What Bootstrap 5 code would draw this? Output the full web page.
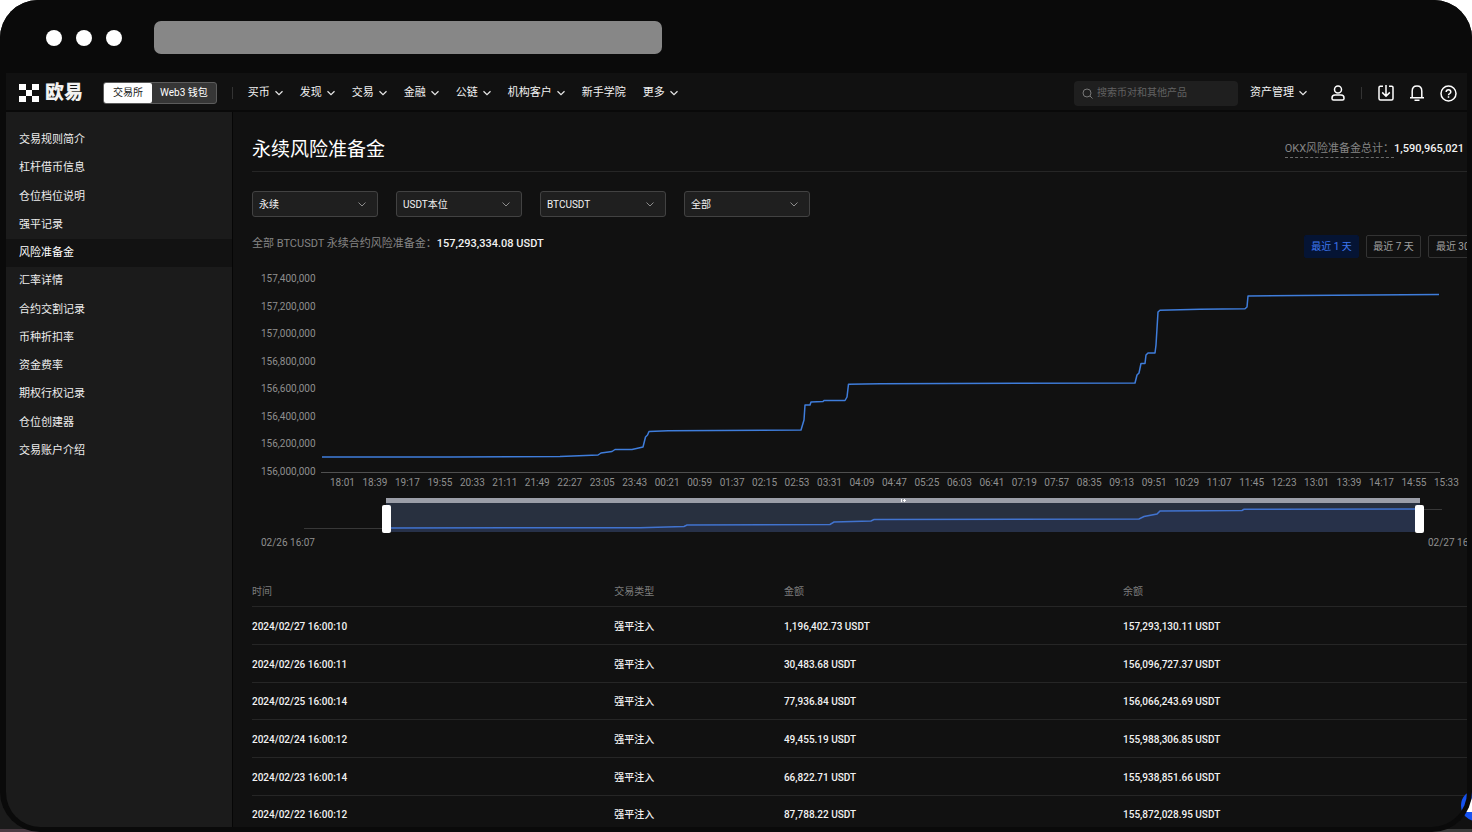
<!DOCTYPE html>
<html lang="zh-CN" data-bs-theme="dark">
<head>
<meta charset="utf-8">
<meta name="viewport" content="width=device-width, initial-scale=1">
<title>永续风险准备金</title>
<link href="https://cdn.jsdelivr.net/npm/bootstrap@5.3.0/dist/css/bootstrap.min.css" rel="stylesheet">
<style>
  body { background: linear-gradient(#fff 50%, #1b1b1b 50%); font: 11px/16px Roboto, "Noto Sans CJK SC", sans-serif; color: #f2f2f2; }
  a { color: inherit; text-decoration: none; }
  .device { border-radius: 38px 38px 0 0; background: #111; }
  .bezel { inset: 73px 0 0 0; border: solid #0a0a0a; border-width: 0 5px 5px 6px; border-radius: 0 0 40px 40px; pointer-events: none; z-index: 5; }
  .desk-edge { height: 3px; background: linear-gradient(90deg, #4b3b43 40px, #3b3b3b 40px); }
  .titlebar { height: 73px; padding: 2px 0 0 46px; background: #0a0a0a; gap: 14px; }
  .dot { width: 16px; height: 16px; background: #fff; }
  .address { width: 508px; height: 33px; margin-left: 18px; border-radius: 7px; background: #878787; border: 0; }
  .topnav { height: 39px; padding: 3px 15px 0 19px; background: #111; border-bottom: 2px solid #090909; }
  .brand-text { font-size: 19px; line-height: 22px; font-weight: 900; margin-left: 6px; }
  .switch-group { margin-left: 20px; height: 22px; border: 1px solid #5c5c5c; border-radius: 3px; background: #363636; font-size: 10px; }
  .switch-group .btn { --bs-btn-font-size: 10px; --bs-btn-line-height: 20px; --bs-btn-padding-y: 0; --bs-btn-padding-x: 8px; --bs-btn-border-radius: 2px; --bs-btn-border-width: 0; color: #fff; }
  .switch-group .btn.on { background: #fff; color: #222; padding-right: 9px; padding-left: 9px; }
  .vline { width: 1px; height: 12px; background: #333; }
  .switch-group + .vline { margin-left: 15px; }
  .icon-btn + .vline { margin: 0 16px; }
  .menu { margin-left: 15px; gap: 17px; }
  .menu a, .asset { gap: 5px; }
  .search { width: 164px; height: 25px; background: #1f1f1f; border-radius: 4px; padding-left: 8px; margin-right: 12px; }
  .search input { font-size: 10px; line-height: 16px; color: #ddd; background: none; border: 0; outline: 0; padding: 0 0 0 4px; }
  .search input::placeholder { color: #626262; opacity: 1; }
  .icon-btn { background: none; border: 0; padding: 0; color: #fff; line-height: 0; }
  .icon-btn + .icon-btn { margin-left: 16px; }
  .asset + .icon-btn { margin-left: 24px; }
  .aside { width: 233px; background: #1b1b1b; padding-top: 14px; border-right: 1px solid #060606; }
  .aside .nav { height: 339px; }
  .aside .nav-link { display: flex; align-items: center; padding: 0 0 0 19px; color: #ededed; }
  .aside .nav-link.active { background: #121212; color: #fff; }
  .content { padding: 0 0 0 19px; }
  .head-row { height: 60px; padding: 16px 8px 0 0; border-bottom: 1px solid #262626; }
  h1 { font-size: 19px; line-height: 28px; font-weight: 400; color: #fff; }
  .muted { color: #858585; }
  .figure-num { font-weight: 500; }
  .dashed { border-bottom: 1px dashed #6a6a6a; }
  .filters { gap: 18px; padding-top: 19px; }
  .filters .form-select { width: 126px; height: 26px; font-size: 10px; line-height: 16px; padding: 1px 24px 0 6px; color: #f2f2f2; border: 1px solid #424242; border-radius: 3px; background-color: #1f1f1f; background-size: 8px 8px; background-position: right 11px center;
    background-image: url("data:image/svg+xml,%3csvg xmlns='http://www.w3.org/2000/svg' viewBox='0 0 8 8'%3e%3cpath d='M.5 2.500 4 6l3.500-3.500' fill='none' stroke='%238c8c8c'/%3e%3c/svg%3e"); }
  .sum-row { padding-top: 18px; }
  .sum-text { padding-top: 1px; }
  .ranges { gap: 7px; margin-right: -18px; }
  .ranges .btn { height: 23px; width: 55px; padding: 1px 0 0; font-size: 10px; line-height: 20px; color: #a0a0a0; border: 1px solid #333; border-radius: 2px; white-space: nowrap; }
  .ranges .btn.on { background: #051434; border-color: #051434; color: #3f78f0; }
  .ranges .btn.wide { width: 62px; }
  .axis { font-size: 10px; line-height: 14px; color: #8f8f8f; }
  .chart { margin-top: 14px; padding-right: 32px; }
  .y-axis { width: 69px; height: 207px; padding-left: 9px; }
  .plot { height: 194px; margin-top: 7px; }
  .x-axis { padding: 0 13px 0 78px; margin-top: -3px; }
  .zoomer { height: 36px; margin: 8px 30px 0 52px; }
  .zoomer input { left: 0; top: 7px; width: 100%; height: 28px; background: none; appearance: none; -webkit-appearance: none; margin: 0; pointer-events: none; }
  .zoomer input::-webkit-slider-thumb { -webkit-appearance: none; width: 9px; height: 28px; border-radius: 2px; background: #fff; border: 0; pointer-events: auto; }
  .zoomer input::-moz-range-thumb { width: 9px; height: 28px; border-radius: 2px; background: #fff; border: 0; pointer-events: auto; }
  .dates { padding-left: 9px; margin: 2px -10px 0 0; }
  .records { margin: 25px 0 0; font-size: 10px; line-height: 16px; table-layout: fixed; --bs-table-bg: transparent; --bs-table-color: #f2f2f2; --bs-table-border-color: #262626; }
  .records > :not(caption) > * > * { padding: 3px 0 0; height: 38px; vertical-align: middle; color: #f2f2f2; }
  .records > tbody > tr:nth-child(3n) > td { height: 37px; }
  .records > thead > tr > th { height: 31px; font-weight: 400; color: #7d7d7d; }
  .records td { font-weight: 500; }
  .c-time { width: 29.7%; } .c-type { width: 13.9%; } .c-amt { width: 27.8%; }
  .chat { right: -20px; bottom: 11px; width: 31px; height: 31px; background: #1652f0; border: 0; padding: 0; line-height: 0; }
</style>
</head>
<body class="vh-100 overflow-hidden">
<div class="device position-relative vh-100 overflow-hidden d-flex flex-column">
  <div class="titlebar d-flex align-items-center flex-shrink-0">
    <span class="dot rounded-circle"></span><span class="dot rounded-circle"></span><span class="dot rounded-circle"></span>
    <input class="address" type="text" aria-label="地址栏">
  </div>

  <header class="topnav d-flex align-items-center flex-shrink-0">
    <a href="#" class="d-flex align-items-center">
      <svg width="20" height="18" viewBox="0 0 20 18" fill="#fff"><path d="M0 0h7v6H0zM13 0h7v6h-7zM7 6h6v6H7zM0 12h7v6H0zM13 12h7v6h-7z"/></svg>
      <span class="brand-text">欧易</span>
    </a>
    <div class="switch-group d-flex">
      <button type="button" class="btn on">交易所</button>
      <button type="button" class="btn">Web3 钱包</button>
    </div>
    <span class="vline"></span>
    <nav class="menu d-flex">
      <a href="#" class="d-flex align-items-center">买币 <svg width="8" height="8" viewBox="0 0 8 8"><use href="#chev"/></svg></a>
      <a href="#" class="d-flex align-items-center">发现 <svg width="8" height="8" viewBox="0 0 8 8"><use href="#chev"/></svg></a>
      <a href="#" class="d-flex align-items-center">交易 <svg width="8" height="8" viewBox="0 0 8 8"><use href="#chev"/></svg></a>
      <a href="#" class="d-flex align-items-center">金融 <svg width="8" height="8" viewBox="0 0 8 8"><use href="#chev"/></svg></a>
      <a href="#" class="d-flex align-items-center">公链 <svg width="8" height="8" viewBox="0 0 8 8"><use href="#chev"/></svg></a>
      <a href="#" class="d-flex align-items-center">机构客户 <svg width="8" height="8" viewBox="0 0 8 8"><use href="#chev"/></svg></a>
      <a href="#">新手学院</a>
      <a href="#" class="d-flex align-items-center">更多 <svg width="8" height="8" viewBox="0 0 8 8"><use href="#chev"/></svg></a>
    </nav>
    <div class="search d-flex align-items-center ms-auto">
      <svg width="11" height="11" viewBox="0 0 11 11" fill="none" stroke="#777"><circle cx="5" cy="5" r="4"/><path d="m8 8 2.500 2.500"/></svg>
      <input type="search" class="flex-grow-1" placeholder="搜索币对和其他产品" aria-label="搜索">
    </div>
    <a href="#" class="asset d-flex align-items-center">资产管理 <svg width="8" height="8" viewBox="0 0 8 8"><use href="#chev"/></svg></a>
    <button type="button" class="icon-btn" aria-label="账户"><svg width="14" height="16" viewBox="0 0 14 16" fill="none" stroke="currentColor" stroke-width="1.500"><circle cx="7" cy="4.500" r="3.500"/><path d="M4 10h6q3 0 3 3v.5q0 1.500-1.500 1.500h-9Q1 15 1 13.500V13q0-3 3-3z"/></svg></button>
    <span class="vline"></span>
    <button type="button" class="icon-btn" aria-label="下载"><svg width="16" height="16" viewBox="0 0 16 16" fill="none" stroke="currentColor" stroke-width="1.500"><path d="M5 1.200H2.200Q1 1.200 1 2.500v11Q1 15 2.500 15h11q1.500 0 1.500-1.500v-11q0-1.300-1.200-1.300H11M8 0v11M4.200 7.400 8 11.200l3.800-3.800"/></svg></button>
    <button type="button" class="icon-btn" aria-label="通知"><svg width="14" height="16" viewBox="0 0 14 16" fill="none" stroke="currentColor" stroke-width="1.500"><path d="M0 12.800h14M2.200 12.500V6.200Q2.200 1 7 1t4.800 5.200v6.300M4.500 15.200h5"/></svg></button>
    <button type="button" class="icon-btn" aria-label="帮助"><svg width="17" height="17" viewBox="0 0 17 17" fill="none" stroke="currentColor" stroke-width="1.500"><circle cx="8.500" cy="8.500" r="7.500"/><path d="M6.200 7q0-2.300 2.300-2.300T10.800 7q0 1-1.200 1.600-1.100.5-1.100 1.600M8.500 11.300v1.500"/></svg></button>
  </header>

  <div class="d-flex flex-grow-1 overflow-hidden">
    <aside class="aside flex-shrink-0">
      <nav class="nav flex-column flex-nowrap">
        <a class="nav-link flex-fill" href="#">交易规则简介</a>
        <a class="nav-link flex-fill" href="#">杠杆借币信息</a>
        <a class="nav-link flex-fill" href="#">仓位档位说明</a>
        <a class="nav-link flex-fill" href="#">强平记录</a>
        <a class="nav-link flex-fill active" href="#">风险准备金</a>
        <a class="nav-link flex-fill" href="#">汇率详情</a>
        <a class="nav-link flex-fill" href="#">合约交割记录</a>
        <a class="nav-link flex-fill" href="#">币种折扣率</a>
        <a class="nav-link flex-fill" href="#">资金费率</a>
        <a class="nav-link flex-fill" href="#">期权行权记录</a>
        <a class="nav-link flex-fill" href="#">仓位创建器</a>
        <a class="nav-link flex-fill" href="#">交易账户介绍</a>
      </nav>
    </aside>

    <main class="content flex-grow-1 overflow-hidden">
      <div class="head-row d-flex align-items-center justify-content-between">
        <h1 class="m-0">永续风险准备金</h1>
        <div class="d-flex"><span class="muted dashed">OKX风险准备金总计：</span><span class="figure-num">1,590,965,021</span></div>
      </div>
      <form class="filters d-flex">
        <select class="form-select" aria-label="合约类型"><option>永续</option></select>
        <select class="form-select" aria-label="保证金"><option>USDT本位</option></select>
        <select class="form-select" aria-label="交易对"><option>BTCUSDT</option></select>
        <select class="form-select" aria-label="类型"><option>全部</option></select>
      </form>
      <div class="sum-row d-flex justify-content-between">
        <div class="sum-text d-flex"><span class="muted">全部 BTCUSDT 永续合约风险准备金：</span><span class="figure-num">157,293,334.08 USDT</span></div>
        <div class="ranges d-flex">
          <button type="button" class="btn on">最近 1 天</button>
          <button type="button" class="btn">最近 7 天</button>
          <button type="button" class="btn wide">最近 30 天</button>
        </div>
      </div>

      <div class="chart axis">
        <div class="d-flex">
          <div class="y-axis d-flex flex-column justify-content-between flex-shrink-0">
            <span>157,400,000</span><span>157,200,000</span><span>157,000,000</span><span>156,800,000</span><span>156,600,000</span><span>156,400,000</span><span>156,200,000</span><span>156,000,000</span>
          </div>
          <svg class="plot flex-grow-1" viewBox="321 279 1119 194" preserveAspectRatio="none" fill="none" aria-label="风险准备金走势">
            <path d="M321 472.500H1440" stroke="#505050" vector-effect="non-scaling-stroke"/>
            <path d="M322 457H450L560 456.500 598 455 601 453 612 451.500 615 449.500H632L643 447 645.500 437 647.500 435 649 431.500 668 430.700 801 430 804 420 805 405H810L811 402 823 401.500 824 400.500H845L847 397 848.500 384.200 880 383.700 1135 383 1137 375 1139 373 1141 363.500H1145L1146 355 1148 353H1155L1156 345 1158 312 1160 310.200 1200 309.300 1245 308.700 1247 307 1248 296 1300 295.500 1439 294.500" stroke="#3f7ddb" stroke-width="1.500" stroke-linejoin="round" vector-effect="non-scaling-stroke"/>
          </svg>
        </div>
      </div>
      <div class="x-axis axis d-flex justify-content-between">
        <span>18:01</span><span>18:39</span><span>19:17</span><span>19:55</span><span>20:33</span><span>21:11</span><span>21:49</span><span>22:27</span><span>23:05</span><span>23:43</span><span>00:21</span><span>00:59</span><span>01:37</span><span>02:15</span><span>02:53</span><span>03:31</span><span>04:09</span><span>04:47</span><span>05:25</span><span>06:03</span><span>06:41</span><span>07:19</span><span>07:57</span><span>08:35</span><span>09:13</span><span>09:51</span><span>10:29</span><span>11:07</span><span>11:45</span><span>12:23</span><span>13:01</span><span>13:39</span><span>14:17</span><span>14:55</span><span>15:33</span>
      </div>
      <div class="zoomer position-relative">
        <svg class="w-100 h-100 d-block" viewBox="304 498 1138 36" preserveAspectRatio="none" fill="none">
          <path d="M304 528.500H386M1420 509.500H1442" stroke="#383838"/>
          <path d="M386 503H1420V532H386z" fill="#28303f"/>
          <path d="M386 528 640 527.700 684 526.500 687 525 830 524.500 834 522 871 521 874 519.500 1139 519 1144 516.500 1157 514 1160 511 1242 510.500 1244 509.300 1420 509V532H386z" fill="#273149"/>
          <path d="M386 498H1420V503H386z" fill="#9b9ea8"/>
          <path d="M386 528 640 527.700 684 526.500 687 525 830 524.500 834 522 871 521 874 519.500 1139 519 1144 516.500 1157 514 1160 511 1242 510.500 1244 509.300 1420 509" stroke="#4173cf" stroke-width="1.500" vector-effect="non-scaling-stroke"/>
          <path d="M901.500 499v3M904.500 499v3M903 500.500h3" stroke="#fff"/>
        </svg>
        <input class="position-absolute" type="range" min="0" max="1000" value="69" aria-label="起始时间">
        <input class="position-absolute" type="range" min="0" max="1000" value="984" aria-label="结束时间">
      </div>
      <div class="dates axis d-flex justify-content-between"><span>02/26 16:07</span><span>02/27 16:07</span></div>

      <table class="table records">
        <thead><tr><th class="c-time">时间</th><th class="c-type">交易类型</th><th class="c-amt">金额</th><th>余额</th></tr></thead>
        <tbody>
          <tr><td>2024/02/27 16:00:10</td><td>强平注入</td><td>1,196,402.73 USDT</td><td>157,293,130.11 USDT</td></tr>
          <tr><td>2024/02/26 16:00:11</td><td>强平注入</td><td>30,483.68 USDT</td><td>156,096,727.37 USDT</td></tr>
          <tr><td>2024/02/25 16:00:14</td><td>强平注入</td><td>77,936.84 USDT</td><td>156,066,243.69 USDT</td></tr>
          <tr><td>2024/02/24 16:00:12</td><td>强平注入</td><td>49,455.19 USDT</td><td>155,988,306.85 USDT</td></tr>
          <tr><td>2024/02/23 16:00:14</td><td>强平注入</td><td>66,822.71 USDT</td><td>155,938,851.66 USDT</td></tr>
          <tr><td>2024/02/22 16:00:12</td><td>强平注入</td><td>87,788.22 USDT</td><td>155,872,028.95 USDT</td></tr>
        </tbody>
      </table>
    </main>
  </div>
  <button type="button" class="chat position-absolute rounded-circle" aria-label="客服"><svg width="31" height="31" viewBox="0 0 31 31"><path d="M5 20 11 8h14v14H5z" fill="#fff"/></svg></button>
  <div class="desk-edge position-absolute bottom-0 start-0 end-0"></div>
  <div class="bezel position-absolute"></div>
</div>
<svg class="d-none"><symbol id="chev" viewBox="0 0 8 8"><path d="M.5 2.300 4 5.700l3.500-3.400" fill="none" stroke="#e8e8e8" stroke-width="1.200"/></symbol></svg>
<script src="https://cdn.jsdelivr.net/npm/bootstrap@5.3.0/dist/js/bootstrap.bundle.min.js"></script>
</body>
</html>
